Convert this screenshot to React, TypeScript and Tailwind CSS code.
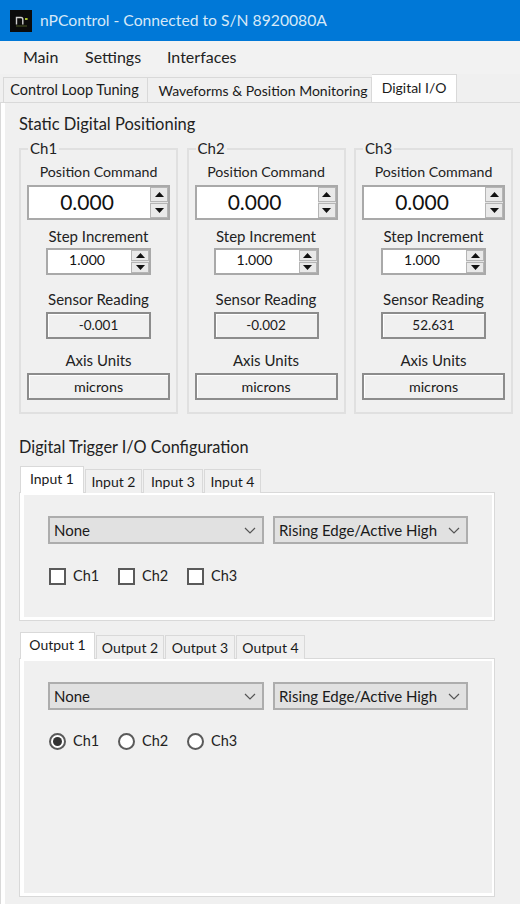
import React from 'react';

const font = "font-['Lato','Liberation_Sans',sans-serif]";
const tabBase = 'flex items-center justify-center whitespace-nowrap border border-[#d9d9d9] text-[#1a1a1a]';

const Logo = () => (
  <svg width="22" height="22" viewBox="0 0 22 22">
    <rect width="22" height="22" fill="#0b0b0b" />
    <path d="M6.5 14.5V7.5h4.5a1.8 1.8 0 0 1 1.8 1.8v5.2" fill="none" stroke="#cfcfcf" strokeWidth="1.4" />
    <rect x="15" y="8" width="2.6" height="2" fill="#a8c030" />
    <rect x="6" y="15.5" width="11" height="1" fill="#4d5a24" />
  </svg>
);

const Arrow = ({ down }: { down?: boolean }) => (
  <svg width="9" height="5" viewBox="0 0 9 5">
    <path d={down ? 'M0 0h9L4.5 5z' : 'M4.5 0L9 5H0z'} fill="#111" />
  </svg>
);

const Chevron = () => (
  <svg width="12" height="7" viewBox="0 0 12 7">
    <path d="M1 1l5 5 5-5" fill="none" stroke="#555" strokeWidth="1.2" />
  </svg>
);

const Spin = ({ value, big }: { value: string; big?: boolean }) => (
  <div
    className={`flex items-center bg-white border-2 border-[#a9a9a9] ${
      big ? 'w-[143px] h-[35px] text-[21px]' : 'w-[105px] h-[27px] text-[14px]'
    }`}
  >
    <div className="flex-1 text-center text-[#111] leading-none pr-[3px] pb-[3px]">{value}</div>
    <div className="flex flex-col self-stretch w-[20px] bg-[#e4e4e4] gap-px border-l-2 border-white">
      <div className="flex-1 flex items-center justify-center border border-[#b5b5b5] bg-[#e9e9e9]">
        <Arrow />
      </div>
      <div className="flex-1 flex items-center justify-center border border-[#b5b5b5] bg-[#e9e9e9]">
        <Arrow down />
      </div>
    </div>
  </div>
);

const ReadOut = ({ value, wide }: { value: string; wide?: boolean }) => (
  <div
    className={`flex items-center justify-center h-[27px] text-[#1a1a1a] bg-[#f0f0f0] border-2 border-[#8c8c8c] shadow-[inset_1px_1px_0_#fff] ${
      wide ? 'w-[143px] text-[14.3px]' : 'w-[105px] text-[13.5px]'
    }`}
  >
    {value}
  </div>
);

const Label = ({ children }: { children: React.ReactNode }) => (
  <div className="h-[20px] leading-[20px] text-[15px] text-[#222]">{children}</div>
);

const Channel = ({ name, reading }: { name: string; reading: string }) => (
  <div className="relative w-[159px] h-[266px] border-2 border-[#e0e0e0] flex flex-col items-center">
    <span className="absolute left-[7px] top-[-11px] bg-[#f0f0f0] px-[2px] text-[15px] leading-[18px] text-[#222]">{name}</span>
    <div className="mt-[12px] h-[20px] leading-[20px] text-[14.2px] text-[#222]">Position Command</div>
    <div className="mt-[3px]"><Spin value="0.000" big /></div>
    <div className="mt-[6px]"><Label>Step Increment</Label></div>
    <div className="mt-[2px]"><Spin value="1.000" /></div>
    <div className="mt-[14px]"><Label>Sensor Reading</Label></div>
    <div className="mt-[3px]"><ReadOut value={reading} /></div>
    <div className="mt-[11px]"><Label>Axis Units</Label></div>
    <div className="mt-[3px]"><ReadOut value="microns" wide /></div>
  </div>
);

const Select = ({ label, width }: { label: string; width: string }) => (
  <div className={`flex items-center justify-between h-[28px] pl-[4px] pr-[6px] bg-[#e1e1e1] border-2 border-[#adadad] text-[15px] text-[#1a1a1a] ${width}`}>
    <span>{label}</span>
    <Chevron />
  </div>
);

const Check = ({ label }: { label: string }) => (
  <div className="flex items-center gap-[7px] w-[69px] h-[20px] text-[14.5px] text-[#222]">
    <div className="w-[17px] h-[17px] bg-white border-2 border-[#5a5a5a]" />
    {label}
  </div>
);

const Radio = ({ label, on }: { label: string; on?: boolean }) => (
  <div className="flex items-center gap-[7px] w-[69px] h-[20px] text-[14.5px] text-[#222]">
    <div className="w-[17px] h-[17px] rounded-full bg-white border-2 border-[#5a5a5a] flex items-center justify-center">
      {on && <div className="w-[9px] h-[9px] rounded-full bg-[#333]" />}
    </div>
    {label}
  </div>
);

const SubTabs = ({ items }: { items: { label: string; width: string }[] }) => (
  <div className="flex h-[27px] items-end relative z-10">
    {items.map((t, i) => (
      <div
        key={t.label}
        className={
          i === 0
            ? `${tabBase} h-[27px] border-b-0 bg-white pb-[3px] text-[14px] ml-px ${t.width}`
            : `${tabBase} h-[24px] bg-[#f0f0f0] text-[14px] ml-px border-b-0 pb-px ${t.width}`
        }
      >
        {t.label}
      </div>
    ))}
  </div>
);

const SubPanel = ({ height, children }: { height: string; children: React.ReactNode }) => (
  <div className={`w-[476px] -mt-px border border-[#d9d9d9] ${height}`}>
    <div className="h-full border-white border-l-[4px] border-r-[2px] border-b-[3px] border-t-[2px] pl-[24px] pt-[21px] bg-[#f0f0f0]">
      {children}
    </div>
  </div>
);

export default function App() {
  return (
    <div className={`w-[520px] h-[904px] overflow-hidden bg-[#f0f0f0] ${font}`}>
      <div className="h-[41px] bg-[#0078d7] flex items-center pl-[10px] gap-[8px]">
        <Logo />
        <span className="text-[15.7px] text-[#d6e8f8]">nPControl - Connected to S/N 8920080A</span>
      </div>

      <div className="h-[33px] bg-[#f2f2f2] flex items-center pl-[23px] pb-[2px] text-[16px] text-[#222]">
        <span className="w-[62px]">Main</span>
        <span className="w-[82px]">Settings</span>
        <span>Interfaces</span>
      </div>

      <div className="h-[28px] flex items-end pl-[3px] bg-[#f0f0f0]">
        <div className={`${tabBase} w-[145px] h-[25px] text-[14.5px] border-b-0 pr-[2px]`}>Control Loop Tuning</div>
        <div className={`${tabBase} w-[224px] h-[25px] text-[14px] border-b-0 border-l-0 pl-[7px]`}>Waveforms &amp; Position Monitoring</div>
        <div className={`${tabBase} w-[85px] h-[28px] text-[14px] bg-white border-b-0 pb-[3px] border-l-0`}>Digital I/O</div>
      </div>

      <div className="h-[802px] border-t border-l border-[#d9d9d9]">
        <div className="h-full border-l-[4px] border-white pl-[14px]">
          <div className="pt-[11px] h-[45px] text-[16.5px] leading-[20px] text-[#222]">Static Digital Positioning</div>
          <div className="flex gap-[8.5px]">
            <Channel name="Ch1" reading="-0.001" />
            <Channel name="Ch2" reading="-0.002" />
            <Channel name="Ch3" reading="52.631" />
          </div>

          <div className="mt-[23px] h-[20px] leading-[20px] text-[16.3px] text-[#222]">Digital Trigger I/O Configuration</div>

          <div className="mt-[9px]">
            <SubTabs
              items={[
                { label: 'Input 1', width: 'w-[64px]' },
                { label: 'Input 2', width: 'w-[57px]' },
                { label: 'Input 3', width: 'w-[60px]' },
                { label: 'Input 4', width: 'w-[57px]' },
              ]}
            />
            <SubPanel height="h-[129px]">
              <div className="flex gap-[9px]">
                <Select label="None" width="w-[216px]" />
                <Select label="Rising Edge/Active High" width="w-[195px]" />
              </div>
              <div className="flex mt-[22px] pl-px">
                <Check label="Ch1" />
                <Check label="Ch2" />
                <Check label="Ch3" />
              </div>
            </SubPanel>
          </div>

          <div className="mt-[11px]">
            <SubTabs
              items={[
                { label: 'Output 1', width: 'w-[75px]' },
                { label: 'Output 2', width: 'w-[68px]' },
                { label: 'Output 3', width: 'w-[70px]' },
                { label: 'Output 4', width: 'w-[69px]' },
              ]}
            />
            <SubPanel height="h-[239px]">
              <div className="flex gap-[9px]">
                <Select label="None" width="w-[216px]" />
                <Select label="Rising Edge/Active High" width="w-[195px]" />
              </div>
              <div className="flex mt-[21px] pl-px">
                <Radio label="Ch1" on />
                <Radio label="Ch2" />
                <Radio label="Ch3" />
              </div>
            </SubPanel>
          </div>
        </div>
      </div>
    </div>
  );
}
